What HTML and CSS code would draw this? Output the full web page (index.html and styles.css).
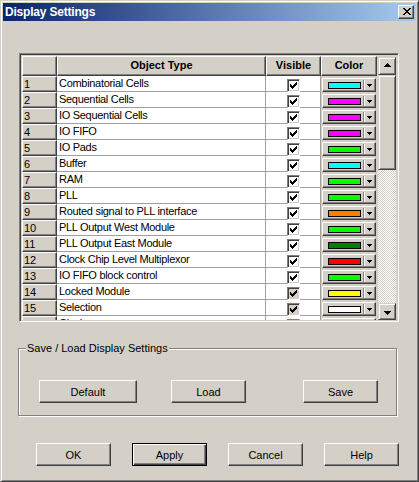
FILE: index.html
```html
<!DOCTYPE html>
<html>
<head>
<meta charset="utf-8">
<title>Display Settings</title>
<link rel="stylesheet" href="styles.css">
</head>
<body>
<div class="window">
  <div class="titlebar">
    <span class="title">Display Settings</span>
    <div class="close"><svg width="8" height="7" viewBox="0 0 8 7" shape-rendering="crispEdges"><path d="M0 0h2v1h-2z M6 0h2v1h-2z M1 1h2v1h-2z M5 1h2v1h-2z M2 2h4v1h-4z M3 3h2v1h-2z M2 4h4v1h-4z M1 5h2v1h-2z M5 5h2v1h-2z M0 6h2v1h-2z M6 6h2v1h-2z" fill="#000"/></svg></div>
  </div>
  <div class="content">
    <div class="frame">
      <div class="grid">
        <div class="hc"></div>
        <div class="hc">Object Type</div>
        <div class="hc">Visible</div>
        <div class="hc">Color</div>

        <div class="rh">1</div><div class="name">Combinatorial Cells</div><div class="vis"><span class="chk"></span></div><div class="col"><span class="cbtn"><span class="sw c-cyan"></span><span class="sep"></span><span class="dd"></span></span></div>
        <div class="rh">2</div><div class="name">Sequential Cells</div><div class="vis"><span class="chk"></span></div><div class="col"><span class="cbtn"><span class="sw c-mag"></span><span class="sep"></span><span class="dd"></span></span></div>
        <div class="rh">3</div><div class="name">IO Sequential Cells</div><div class="vis"><span class="chk"></span></div><div class="col"><span class="cbtn"><span class="sw c-mag"></span><span class="sep"></span><span class="dd"></span></span></div>
        <div class="rh">4</div><div class="name">IO FIFO</div><div class="vis"><span class="chk"></span></div><div class="col"><span class="cbtn"><span class="sw c-mag"></span><span class="sep"></span><span class="dd"></span></span></div>
        <div class="rh">5</div><div class="name">IO Pads</div><div class="vis"><span class="chk"></span></div><div class="col"><span class="cbtn"><span class="sw c-green"></span><span class="sep"></span><span class="dd"></span></span></div>
        <div class="rh">6</div><div class="name">Buffer</div><div class="vis"><span class="chk"></span></div><div class="col"><span class="cbtn"><span class="sw c-cyan"></span><span class="sep"></span><span class="dd"></span></span></div>
        <div class="rh">7</div><div class="name">RAM</div><div class="vis"><span class="chk"></span></div><div class="col"><span class="cbtn"><span class="sw c-green"></span><span class="sep"></span><span class="dd"></span></span></div>
        <div class="rh">8</div><div class="name">PLL</div><div class="vis"><span class="chk"></span></div><div class="col"><span class="cbtn"><span class="sw c-green"></span><span class="sep"></span><span class="dd"></span></span></div>
        <div class="rh">9</div><div class="name">Routed signal to PLL interface</div><div class="vis"><span class="chk"></span></div><div class="col"><span class="cbtn"><span class="sw c-orange"></span><span class="sep"></span><span class="dd"></span></span></div>
        <div class="rh">10</div><div class="name">PLL Output West Module</div><div class="vis"><span class="chk"></span></div><div class="col"><span class="cbtn"><span class="sw c-green"></span><span class="sep"></span><span class="dd"></span></span></div>
        <div class="rh">11</div><div class="name">PLL Output East Module</div><div class="vis"><span class="chk"></span></div><div class="col"><span class="cbtn"><span class="sw c-dkgreen"></span><span class="sep"></span><span class="dd"></span></span></div>
        <div class="rh">12</div><div class="name">Clock Chip Level Multiplexor</div><div class="vis"><span class="chk"></span></div><div class="col"><span class="cbtn"><span class="sw c-red"></span><span class="sep"></span><span class="dd"></span></span></div>
        <div class="rh">13</div><div class="name">IO FIFO block control</div><div class="vis"><span class="chk"></span></div><div class="col"><span class="cbtn"><span class="sw c-green"></span><span class="sep"></span><span class="dd"></span></span></div>
        <div class="rh">14</div><div class="name">Locked Module</div><div class="vis"><span class="chk dis"></span></div><div class="col"><span class="cbtn"><span class="sw c-yellow"></span><span class="sep"></span><span class="dd"></span></span></div>
        <div class="rh">15</div><div class="name">Selection</div><div class="vis"><span class="chk dis"></span></div><div class="col"><span class="cbtn"><span class="sw c-white"></span><span class="sep"></span><span class="dd"></span></span></div>
        <div class="rh">16</div><div class="name">Clock</div><div class="vis"><span class="chk dis"></span></div><div class="col"><span class="cbtn"><span class="sw c-white"></span><span class="sep"></span><span class="dd"></span></span></div>
      </div>
      <div class="vscroll">
        <div class="sbtn up"><svg width="7" height="4" viewBox="0 0 7 4" shape-rendering="crispEdges"><path d="M3 0h1v1h1v1h1v1h1v1h-7v-1h1v-1h1v-1h1z" fill="#000"/></svg></div>
        <div class="thumb"></div>
        <div class="track"></div>
        <div class="sbtn down"><svg width="7" height="4" viewBox="0 0 7 4" shape-rendering="crispEdges"><path d="M0 0h7v1h-1v1h-1v1h-1v1h-1v-1h-1v-1h-1v-1h-1z" fill="#000"/></svg></div>
      </div>
    </div>

    <fieldset class="group">
      <legend>Save / Load Display Settings</legend>
      <div class="group-buttons">
        <button class="btn wide">Default</button>
        <button class="btn load">Load</button>
        <button class="btn save">Save</button>
      </div>
    </fieldset>

    <div class="dialog-buttons">
      <button class="btn">OK</button>
      <button class="btn default">Apply</button>
      <button class="btn">Cancel</button>
      <button class="btn">Help</button>
    </div>
  </div>
</div>
</body>
</html>
```

FILE: styles.css
```css
* { box-sizing: border-box; }
html, body { margin: 0; padding: 0; }
body {
  background: #d4d0c8;
  font-family: "Liberation Sans", Arial, sans-serif;
  font-size: 11px;
  color: #000;
}
.window {
  width: 419px;
  height: 482px;
  background: #d4d0c8;
  border: 1px solid;
  border-color: #d4d0c8 #404040 #404040 #d4d0c8;
  box-shadow: inset 1px 1px #fff, inset -1px -1px #808080;
  padding: 2px;
}
.titlebar {
  height: 18px;
  display: flex;
  align-items: center;
  justify-content: space-between;
  padding: 0 2px;
  background: linear-gradient(to right, #0a246a, #a6caf0);
}
.title {
  color: #fff;
  font-weight: bold;
  font-size: 12px;
  letter-spacing: -0.2px;
  line-height: 18px;
}
.close {
  width: 16px;
  height: 14px;
  background: #d4d0c8;
  border: 1px solid;
  border-color: #fff #404040 #404040 #fff;
  box-shadow: inset -1px -1px #808080;
  padding: 2px 0 0 4px;
}
.close svg { display: block; }

.frame {
  margin: 32px 0 0 16px;
  width: 380px;
  height: 269px;
  border: 1px solid;
  border-color: #808080 #fff #fff #808080;
  box-shadow: inset 1px 1px #404040, inset -1px -1px #d4d0c8;
  padding: 2px 2px 1px 2px;
  display: flex;
  align-items: flex-start;
  gap: 1px;
}
.grid {
  width: 355px;
  height: 264px;
  overflow: hidden;
  display: grid;
  grid-template-columns: 35px 209px 55px 56px;
  grid-template-rows: 20px;
  grid-auto-rows: 16px;
  align-content: start;
}
.hc, .rh {
  background: #d4d0c8;
  border: 1px solid;
  border-color: #fff #404040 #404040 #fff;
  box-shadow: inset -1px -1px #808080;
  white-space: nowrap;
  overflow: hidden;
}
.hc {
  font-weight: bold;
  text-align: center;
  line-height: 17px;
}
.rh {
  padding-left: 1px;
  line-height: 14px;
}
.name {
  background: #fff;
  border-right: 1px solid #a0a0a0;
  border-bottom: 1px solid #a0a0a0;
  padding-left: 2px;
  line-height: 15px;
  letter-spacing: -0.3px;
  white-space: nowrap;
  overflow: hidden;
}
.vis {
  background: #fff;
  border-right: 1px solid #a0a0a0;
  border-bottom: 1px solid #a0a0a0;
  display: flex;
  justify-content: center;
  align-items: flex-start;
  padding-top: 3px;
}
.chk {
  display: block;
  width: 13px;
  height: 13px;
  border: 1px solid;
  border-color: #808080 #fff #fff #808080;
  box-shadow: inset 1px 1px #404040, inset -1px -1px #d4d0c8;
  background: #fff url("data:image/svg+xml,%3Csvg xmlns='http://www.w3.org/2000/svg' width='7' height='7' viewBox='0 0 7 7' shape-rendering='crispEdges'%3E%3Cpath d='M0 2v3h1v1h1v1h1v-1h1v-1h1v-1h1v-1h1v-3h-1v1h-1v1h-1v1h-1v1h-1v-1h-1v-1z' fill='%23000'/%3E%3C/svg%3E") no-repeat 2px 2px;
}
.chk.dis { background-color: #d4d0c8; }
.col {
  background: #d4d0c8;
  padding: 2px 0 0 1px;
}
.cbtn {
  width: 54px;
  height: 14px;
  border: 1px solid;
  border-color: #fff #404040 #404040 #fff;
  box-shadow: inset -1px -1px #808080;
  display: flex;
  align-items: center;
  padding-left: 5px;
}
.sw {
  width: 33px;
  height: 7px;
  border: 1px solid #000;
}
.c-cyan { background: #00ffff; }
.c-mag { background: #ff00ff; }
.c-green { background: #00ff00; }
.c-orange { background: #ff8000; }
.c-dkgreen { background: #008000; }
.c-red { background: #ff0000; }
.c-yellow { background: #ffff00; }
.c-white { background: #ffffff; }
.sep {
  width: 2px;
  height: 10px;
  margin-left: 2px;
  border-left: 1px solid #808080;
  border-right: 1px solid #fff;
}
.dd {
  width: 5px;
  height: 3px;
  margin-left: 2px;
  background: url("data:image/svg+xml,%3Csvg xmlns='http://www.w3.org/2000/svg' width='5' height='3' viewBox='0 0 5 3' shape-rendering='crispEdges'%3E%3Cpath d='M0 0h5v1h-1v1h-1v1h-1v-1h-1v-1h-1z' fill='%23000'/%3E%3C/svg%3E") no-repeat;
}

.vscroll {
  width: 18px;
  height: 263px;
  margin-top: 1px;
  display: flex;
  flex-direction: column;
}
.sbtn, .thumb {
  background: #d4d0c8;
  border: 1px solid;
  border-color: #d4d0c8 #404040 #404040 #d4d0c8;
  box-shadow: inset 1px 1px #fff, inset -1px -1px #808080;
}
.sbtn {
  display: flex;
  justify-content: center;
}
.sbtn svg { display: block; }
.sbtn.up { height: 18px; padding-top: 5px; }
.sbtn.down { height: 17px; padding-top: 7px; }
.thumb { height: 95px; }
.track {
  flex: 1;
  background-color: #d4d0c8;
  background-image: repeating-conic-gradient(#fff 0% 25%, #d4d0c8 0% 50%);
  background-size: 2px 2px;
}

.group {
  margin: 20px 0 0 15px;
  width: 379px;
  height: 74px;
  padding: 0;
  border: 1px solid #808080;
  box-shadow: inset 1px 1px #fff, 1px 1px #fff;
  min-inline-size: 0;
}
.group legend {
  margin-left: 7px;
  padding: 0 1px;
  line-height: 13px;
  background: #d4d0c8;
  font-size: 11px;
}
.group-buttons {
  display: flex;
  margin-top: 25px;
}
.btn {
  width: 75px;
  height: 23px;
  padding: 0;
  background: #d4d0c8;
  border: 1px solid;
  border-color: #fff #404040 #404040 #fff;
  box-shadow: inset -1px -1px #808080;
  font-family: "Liberation Sans", Arial, sans-serif;
  font-size: 11px;
  color: #000;
  text-align: center;
}
.btn.default {
  border: 1px solid #000;
  box-shadow: inset 1px 1px #fff, inset -1px -1px #404040, inset -2px -2px #808080;
}
.btn.wide { width: 98px; margin-left: 20px; }
.btn.load { margin-left: 34px; }
.btn.save { margin-left: 57px; }
.dialog-buttons {
  display: flex;
  gap: 21px;
  margin-top: 27px;
  padding-left: 33px;
}
```
